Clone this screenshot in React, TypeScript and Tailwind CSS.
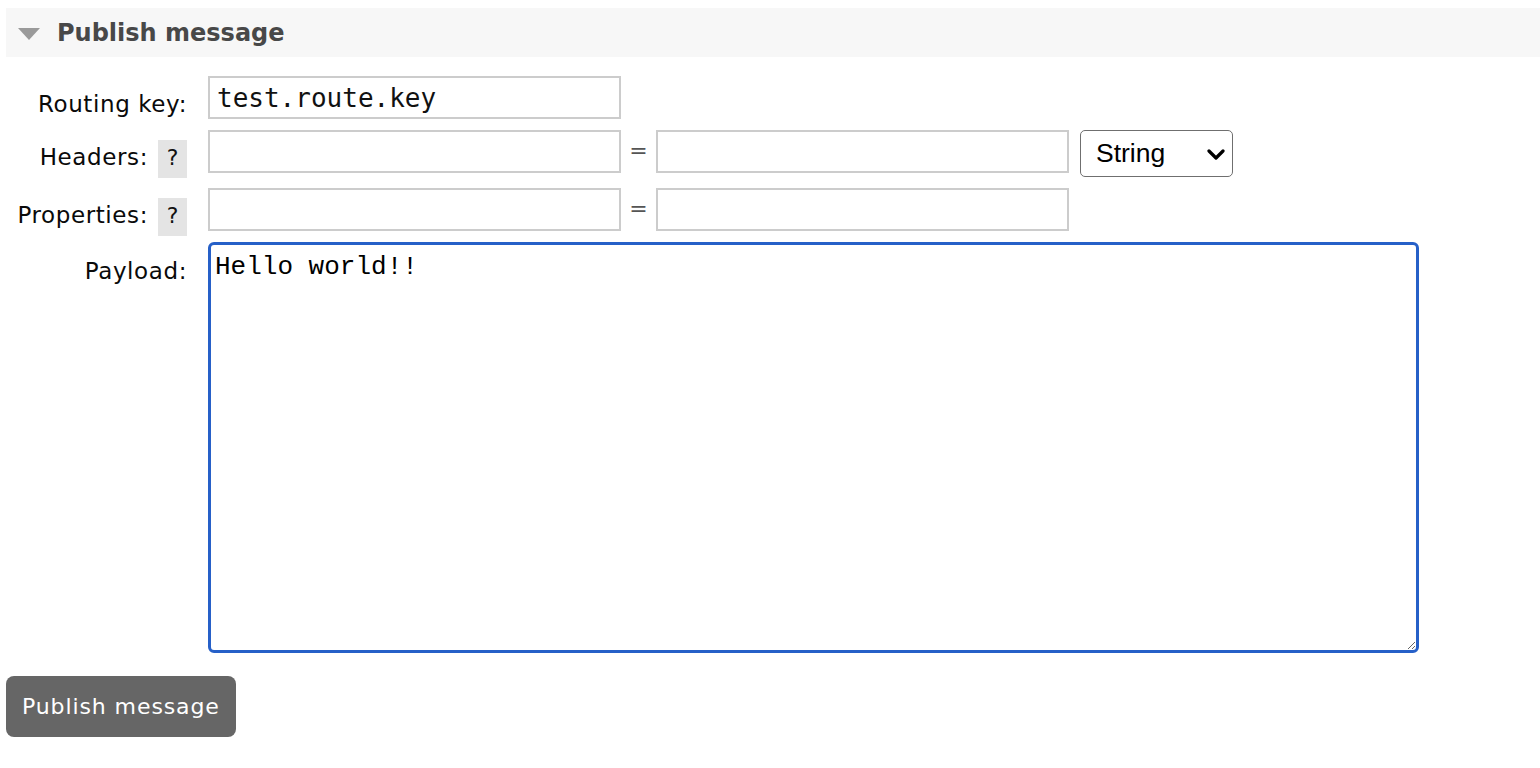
import React, { useState } from "react";

const labelFont = { fontFamily: '"DejaVu Sans", Verdana, sans-serif' };

function HelpBox() {
  return (
    <span className="ml-[10px] inline-block w-[29px] bg-[#e4e4e4] pt-[5px] pb-[7px] text-center text-[22px] leading-[26px] tracking-normal text-[#111]">
      ?
    </span>
  );
}

function TextBox({ value, mono }: { value?: string; mono?: boolean }) {
  const [v, setV] = useState(value ?? "");
  return (
    <input
      value={v}
      onChange={(e) => setV(e.target.value)}
      className="h-[43px] w-[413px] border-2 border-[#cccccc] bg-white px-[7px] text-[26px] tracking-normal text-[#111] outline-none"
      style={mono ? { fontFamily: '"DejaVu Sans Mono", Menlo, monospace' } : undefined}
    />
  );
}

function Equals() {
  return <span className="w-[35px] pt-[4px] text-center text-[22px] tracking-normal text-[#555]">=</span>;
}

function Label({ children, className }: { children: React.ReactNode; className?: string }) {
  return (
    <div className={"w-[181px] shrink-0 text-right leading-[26px] " + (className ?? "")}>
      {children}
    </div>
  );
}

export default function App() {
  const [payload, setPayload] = useState("Hello world!!");
  const [type, setType] = useState("String");

  return (
    <div
      className="min-h-screen bg-white pl-[6px] pt-[8px] text-[23px] tracking-[0.6px] text-[#0a0a0a]"
      style={labelFont}
    >
      {/* section header */}
      <div className="flex h-[49px] items-center bg-[#f7f7f7] tracking-normal">
        <svg width="22" height="12" viewBox="0 0 22 12" className="ml-[12px] mt-[2px]">
          <path d="M0 0H22L11 12Z" fill="#9a9a9a" />
        </svg>
        <span className="ml-[17px] text-[24px] font-bold text-[#484848]">Publish message</span>
      </div>

      <div className="flex flex-col">
        <div className="mt-[19px] flex gap-x-[21px]">
          <Label className="pt-[15px]">Routing key:</Label>
          <TextBox value="test.route.key" mono />
        </div>

        <div className="mt-[11px] flex items-start gap-x-[21px]">
          <Label className="pt-[10px]">
            Headers:
            <HelpBox />
          </Label>
          <div className="flex items-start">
            <TextBox />
            <Equals />
            <TextBox />
            <div className="relative ml-[11px]">
              <select
                value={type}
                onChange={(e) => setType(e.target.value)}
                className="h-[47px] w-[153px] appearance-none rounded-[5px] border border-[#6f6f6f] bg-white pl-[15px] text-[26.5px] tracking-normal text-black outline-none"
                style={{ fontFamily: '"Liberation Sans", Arial, sans-serif' }}
              >
                <option>String</option>
                <option>Number</option>
                <option>Boolean</option>
              </select>
              <svg
                width="18"
                height="11"
                viewBox="0 0 18 11"
                className="pointer-events-none absolute left-[127px] top-[19px]"
              >
                <path
                  d="M2 2L9 9L16 2"
                  fill="none"
                  stroke="#000"
                  strokeWidth="3.2"
                  strokeLinecap="round"
                  strokeLinejoin="round"
                />
              </svg>
            </div>
          </div>
        </div>

        <div className="mt-[10px] flex items-start gap-x-[21px]">
          <Label className="pt-[10px]">
            Properties:
            <HelpBox />
          </Label>
          <div className="flex items-start">
            <TextBox />
            <Equals />
            <TextBox />
          </div>
        </div>

        <div className="mt-[6px] flex items-start gap-x-[21px]">
          <Label className="pt-[16px]">Payload:</Label>
          <textarea
            value={payload}
            onChange={(e) => setPayload(e.target.value)}
            className="block h-[411px] w-[1211px] rounded-[6px] border-[3px] border-[#2660c8] px-[4px] pt-[7px] text-[26px] leading-[30px] tracking-normal text-black outline-none"
            style={{ fontFamily: '"Liberation Mono", "Courier New", monospace' }}
          />
        </div>
      </div>

      <button className="mt-[23px] h-[61px] rounded-[8px] bg-[#666666] px-[16px] text-[22px] tracking-[0.9px] text-white">
        Publish message
      </button>
    </div>
  );
}
